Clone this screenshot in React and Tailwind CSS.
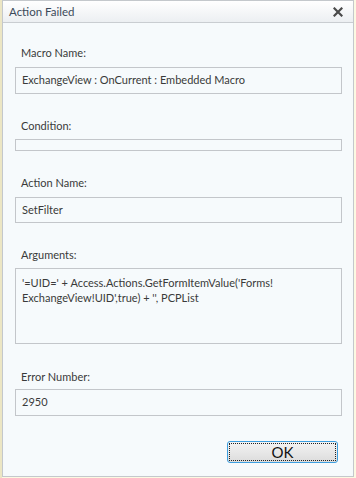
export default function App() {
  const font = { fontFamily: 'Lato, "Noto Sans", sans-serif' };
  return (
    <div className="w-[356px] h-[478px] bg-[#fcf9e2] relative overflow-hidden" style={font}>
      <div className="absolute left-0 top-0 w-[2px] h-full bg-[#ece6c4]" />
      <div className="ml-[2px] w-[352px] h-[477px] border border-[#c4c8cc] bg-[#f6fafc] flex flex-col">
        <div className="h-[22px] border-b border-[#c9cdd1] bg-gradient-to-b from-[#ffffff] to-[#eceff2] flex items-center justify-between pl-[6px] pr-[10px]">
          <span className="text-[11.5px] text-[#3c4a5a] leading-none">Action Failed</span>
          <svg width="10" height="10" viewBox="0 0 10 10">
            <path d="M1.5 1.5 L8.5 8.5 M8.5 1.5 L1.5 8.5" stroke="#4a4a4a" strokeWidth="2.2" strokeLinecap="square" />
          </svg>
        </div>
        <div className="flex flex-col pl-[12px] pr-[11px] text-[11px] text-[#3a3a3a]">
          <div className="mt-[22px] ml-[6px] h-[16px] leading-[16px]">Macro Name:</div>
          <div className="mt-[6px] h-[27px] border border-[#c3c6ca] flex items-center px-[6px]">ExchangeView : OnCurrent : Embedded Macro</div>
          <div className="mt-[24px] ml-[6px] h-[16px] leading-[16px]">Condition:</div>
          <div className="mt-[5px] h-[12px] border border-[#c3c6ca]" />
          <div className="mt-[24px] ml-[6px] h-[16px] leading-[16px]">Action Name:</div>
          <div className="mt-[6px] h-[26px] border border-[#c3c6ca] flex items-center px-[6px]">SetFilter</div>
          <div className="mt-[24px] ml-[6px] h-[16px] leading-[16px]">Arguments:</div>
          <div className="mt-[5px] h-[76px] border border-[#c3c6ca] px-[6px] pt-[6px] leading-[15px]">
            <div>'=UID=' + Access.Actions.GetFormItemValue('Forms!</div>
            <div>ExchangeView!UID',true) + '', PCPList</div>
          </div>
          <div className="mt-[25px] ml-[6px] h-[16px] leading-[16px]">Error Number:</div>
          <div className="mt-[4px] h-[27px] border border-[#c3c6ca] flex items-center px-[6px]">2950</div>
          <div className="mt-[25px] flex justify-end pr-[4px]">
            <div className="w-[111px] h-[22px] rounded-[3px] border border-[#3d9fe0] p-[1px] bg-gradient-to-b from-[#f4f4f4] to-[#dcdcdc]">
              <div className="w-full h-full border border-dotted border-[#222] flex items-center justify-center text-[15px] text-[#111] leading-none">OK</div>
            </div>
          </div>
        </div>
      </div>
    </div>
  );
}
